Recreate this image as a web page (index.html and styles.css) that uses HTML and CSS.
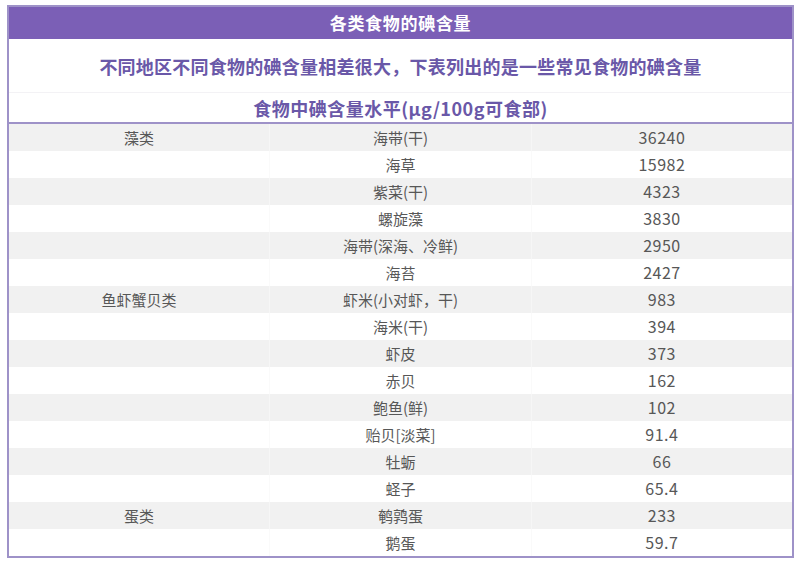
FILE: index.html
```html
<!DOCTYPE html>
<html lang="zh-CN">
<head>
<meta charset="utf-8">
<title>各类食物的碘含量</title>
<link rel="stylesheet" href="styles.css">
</head>
<body>
<table class="iodine">
  <thead>
    <tr class="title-row"><th colspan="3">各类食物的碘含量</th></tr>
    <tr class="sub-row"><th colspan="3">不同地区不同食物的碘含量相差很大，下表列出的是一些常见食物的碘含量</th></tr>
    <tr class="unit-row"><th colspan="3">食物中碘含量水平(μg/100g可食部)</th></tr>
  </thead>
  <tbody>
    <tr><td>藻类</td><td>海带(干)</td><td>36240</td></tr>
    <tr><td></td><td>海草</td><td>15982</td></tr>
    <tr><td></td><td>紫菜(干)</td><td>4323</td></tr>
    <tr><td></td><td>螺旋藻</td><td>3830</td></tr>
    <tr><td></td><td>海带(深海、冷鲜)</td><td>2950</td></tr>
    <tr><td></td><td>海苔</td><td>2427</td></tr>
    <tr><td>鱼虾蟹贝类</td><td>虾米(小对虾，干)</td><td>983</td></tr>
    <tr><td></td><td>海米(干)</td><td>394</td></tr>
    <tr><td></td><td>虾皮</td><td>373</td></tr>
    <tr><td></td><td>赤贝</td><td>162</td></tr>
    <tr><td></td><td>鲍鱼(鲜)</td><td>102</td></tr>
    <tr><td></td><td>贻贝[淡菜]</td><td>91.4</td></tr>
    <tr><td></td><td>牡蛎</td><td>66</td></tr>
    <tr><td></td><td>蛏子</td><td>65.4</td></tr>
    <tr><td>蛋类</td><td>鹌鹑蛋</td><td>233</td></tr>
    <tr><td></td><td>鹅蛋</td><td>59.7</td></tr>
  </tbody>
</table>
</body>
</html>
```
FILE: styles.css
```css
html, body {
  margin: 0;
  padding: 0;
  background: #ffffff;
}
body {
  padding: 5px 0 0 7px;
  font-family: "Noto Sans CJK SC", "Noto Sans", sans-serif;
}
.iodine {
  border-collapse: collapse;
  width: 787px;
  border: 2px solid #9e92c8;
  table-layout: fixed;
}
.iodine th {
  padding: 0;
  text-align: center;
  font-weight: 700;
}
.title-row th {
  background: #7b5fb6;
  color: #ffffff;
  height: 32px;
  font-size: 17px;
  letter-spacing: 0.7px;
  line-height: 32px;
}
.sub-row th {
  height: 53px;
  color: #6a58a8;
  font-size: 18px;
  letter-spacing: 0.25px;
  border-bottom: 1px solid #f3f2f5;
}
.unit-row th {
  height: 29px;
  color: #6a58a8;
  font-size: 18px;
  letter-spacing: 0.5px;
  border-bottom: 2px solid #9e92c8;
}
.iodine td {
  height: 27px;
  padding: 0;
  text-align: center;
  color: #575757;
  font-size: 15px;
  line-height: 27px;
  border-left: 1px solid #fafafa;
}
.iodine td:first-child {
  border-left: none;
}
.iodine td:last-child {
  font-size: 16px;
  letter-spacing: 0.5px;
}
.iodine tbody tr:nth-child(odd) td {
  background: #f1f1f1;
}
.iodine tbody tr:nth-child(odd) td + td {
  border-left-color: #f6f6f6;
}
```
